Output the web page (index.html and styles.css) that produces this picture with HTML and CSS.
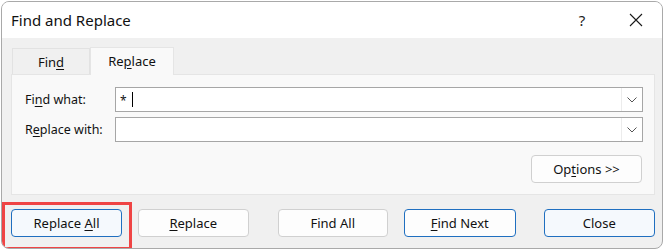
FILE: index.html
```html
<!DOCTYPE html>
<html>
<head>
<meta charset="utf-8">
<link rel="stylesheet" href="styles.css">
</head>
<body>
<div class="window">
  <div class="titlebar">
    <span class="title">Find and Replace</span>
    <span class="help">?</span>
    <span class="close-x">
      <svg width="14" height="14" viewBox="0 0 14 14"><path d="M1 1 L13 13 M13 1 L1 13" stroke="#1a1a1a" stroke-width="1.1" fill="none"/></svg>
    </span>
  </div>
  <div class="content">
    <div class="tabs">
      <div class="tab"><span>Fin<u>d</u></span></div>
      <div class="tab active"><span>Re<u>p</u>lace</span></div>
    </div>
    <div class="panel">
      <div class="row">
        <label class="lbl">Fi<u>n</u>d what:</label>
        <div class="combo">
          <div class="field"><span class="val">*</span><span class="caret"></span></div>
          <div class="drop"><svg width="10" height="6" viewBox="0 0 10 6"><path d="M0.5 0.5 L5 5 L9.5 0.5" stroke="#555" stroke-width="1" fill="none"/></svg></div>
        </div>
      </div>
      <div class="row">
        <label class="lbl">R<u>e</u>place with:</label>
        <div class="combo">
          <div class="field"></div>
          <div class="drop"><svg width="10" height="6" viewBox="0 0 10 6"><path d="M0.5 0.5 L5 5 L9.5 0.5" stroke="#555" stroke-width="1" fill="none"/></svg></div>
        </div>
      </div>
      <div class="opts-row">
        <button class="btn"><span>Op<u>t</u>ions &gt;&gt;</span></button>
      </div>
    </div>
    <div class="actions">
      <div class="hl-wrap">
        <button class="btn default"><span>Replace <u>A</u>ll</span></button>
        <div class="highlight"></div>
      </div>
      <button class="btn"><span><u>R</u>eplace</span></button>
      <button class="btn gap-l"><span>Find All</span></button>
      <button class="btn blue"><span><u>F</u>ind Next</span></button>
      <button class="btn default close">Close</button>
    </div>
  </div>
</div>
</body>
</html>
```
FILE: styles.css
```css
* { box-sizing: border-box; }
html, body { margin: 0; padding: 0; }
body {
  background: #ffffff;
  width: 667px;
  height: 250px;
  overflow: hidden;
  font-family: "Noto Sans", "Open Sans", sans-serif;
  font-size: 12px;
  color: #111;
}
u { text-decoration: underline; text-underline-offset: 2px; }
.window {
  margin: 1px 0 0 1px;
  width: 662px;
  height: 248px;
  border: 1px solid #a9a9a9;
  border-radius: 8px;
  overflow: hidden;
  background: #f0f0f0;
  display: flex;
  flex-direction: column;
}
.titlebar {
  height: 36px;
  flex: none;
  background: #ffffff;
  display: flex;
  align-items: center;
  padding-left: 9px;
}
.title {
  font-size: 15px;
  flex: 1;
  color: #111;
  margin-top: -1px;
}
.help {
  font-size: 15px;
  width: 20px;
  text-align: center;
  margin-right: 37px;
  color: #222;
  margin-top: -1px;
}
.close-x {
  width: 14px;
  height: 14px;
  margin-right: 19px;
  display: flex;
  margin-top: -1px;
}
.content {
  flex: 1;
  display: flex;
  flex-direction: column;
  padding: 8px 7px 0 9px;
}
.tabs {
  display: flex;
  align-items: flex-end;
  height: 28px;
  margin-left: 1px;
}
.tab {
  width: 78px;
  height: 26px;
  border: 1px solid #e2e2e2;
  border-bottom: none;
  background: #f0f0f0;
  display: flex;
  align-items: center;
  justify-content: center;
  font-size: 13px;
}
.tab.active {
  width: 84px;
  height: 28px;
  background: #f9f9f9;
  border-color: #e5e5e5;
  margin-bottom: -1px;
  position: relative;
  z-index: 1;
  padding-bottom: 2px;
}
.panel {
  height: 121px;
  background: #f9f9f9;
  border: 1px solid #e5e5e5;
  display: flex;
  flex-direction: column;
  padding: 12px 11px 0 13px;
  gap: 5px;
}
.row {
  display: flex;
  align-items: center;
  height: 25px;
}
.lbl {
  width: 90px;
  font-size: 12.5px;
}
.combo {
  flex: 1;
  height: 25px;
  border: 1px solid #a6a6a6;
  background: #ffffff;
  display: flex;
}
.field {
  flex: 1;
  display: flex;
  align-items: center;
  padding-left: 4px;
}
.val { font-size: 12px; margin-top: 2px; }
.caret {
  width: 1px;
  height: 15px;
  background: #000;
  margin-left: 5px;
}
.drop {
  width: 21px;
  border-left: 1px solid #ececec;
  display: flex;
  align-items: center;
  justify-content: center;
}
.opts-row {
  display: flex;
  justify-content: flex-end;
  margin-top: 8px;
  padding-right: 1px;
}
.btn {
  width: 111px;
  height: 28px;
  border: 1px solid #d0d0d0;
  border-radius: 4px;
  background: #fdfdfd;
  font-family: "Noto Sans", "Open Sans", sans-serif;
  font-size: 13px;
  color: #111;
  padding: 0;
  display: flex;
  align-items: center;
  justify-content: center;
}
.btn.blue {
  border-color: #1f6fc0;
  background: #fdfdfd;
  width: 112px;
}
.btn.default {
  border-color: #1f6fc0;
  background: #f5f9fd;
}
.actions {
  display: flex;
  margin-top: 14px;
  gap: 16px;
}
.gap-l { margin-left: 13px; }
.hl-wrap {
  position: relative;
}
.highlight {
  position: absolute;
  left: -9px;
  top: -7px;
  width: 130px;
  height: 48px;
  border: 3px solid #ef4444;
  pointer-events: none;
}
.btn.close { width: 112px; margin-left: 12px; }
```
